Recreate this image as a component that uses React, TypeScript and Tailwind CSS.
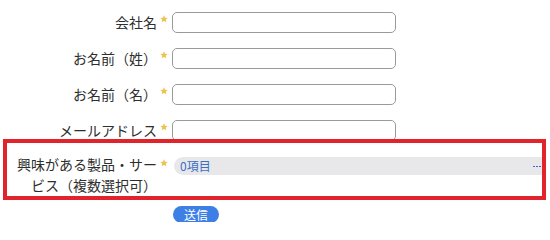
import React from "react";

const fields = ["会社名", "お名前（姓）", "お名前（名）", "メールアドレス"];

function Star() {
    return (
        <svg viewBox="0 0 24 24" className="w-[8px] h-[8px] ml-[3px]" fill="#ecc453">
            <path d="M12 1l3.3 7 7.7.9-5.7 5.2 1.6 7.6L12 17.9l-6.9 3.8 1.6-7.6L1 9l7.7-.9z" />
        </svg>
    );
}

export default function App() {
    return (
        <div
            className="relative w-[550px] h-[222px] bg-white text-[#2e2e2e]"
            style={{ fontFamily: '"Noto Sans CJK JP", "Noto Sans", sans-serif' }}
        >
            <div className="pt-[12px] flex flex-col">
                {fields.map((label, k) => (
                    <div key={k} className="flex items-start h-[21px] mb-[15px]">
                        <div className="w-[157px] text-right text-[14px] leading-[21px]">{label}</div>
                        <div className="w-[15px] pt-[3px]">
                            <Star />
                        </div>
                        <div className="w-[224px] h-[21px] rounded-[5px] border border-[#9a9a9a] bg-white" />
                    </div>
                ))}

                <div className="flex items-start -mt-[2px]">
                    <div className="w-[157px] pl-[14px] text-right text-[14px] leading-[21px]">
                        興味がある製品・サービス（複数選択可）
                    </div>
                    <div className="w-[15px] pt-[5px]">
                        <Star />
                    </div>
                    <div className="ml-[2px] mt-[3px] w-[368px] h-[18px] rounded-l-full bg-[#e8e8ea] flex items-center justify-between pl-[6px] pr-[1px]">
                        <span className="text-[12px] text-[#3a6fc6]">0項目</span>
                        <span className="flex gap-[1px] items-center">
                            <span className="w-[2px] h-[1px] bg-[#3a6fc6]" />
                            <span className="w-[2px] h-[1px] bg-[#3a6fc6]" />
                            <span className="w-[2px] h-[1px] bg-[#3a6fc6]" />
                        </span>
                    </div>
                </div>

                <div className="pl-[173px] mt-[5px]">
                    <button className="w-[46px] h-[17px] rounded-full bg-[#3d7fe4] text-white text-[12px] leading-[17px]">
                        送信
                    </button>
                </div>
            </div>

            <div className="absolute left-[3px] top-[139px] w-[543px] h-[61px] border-4 border-[#e1232b] pointer-events-none" />
        </div>
    );
}
